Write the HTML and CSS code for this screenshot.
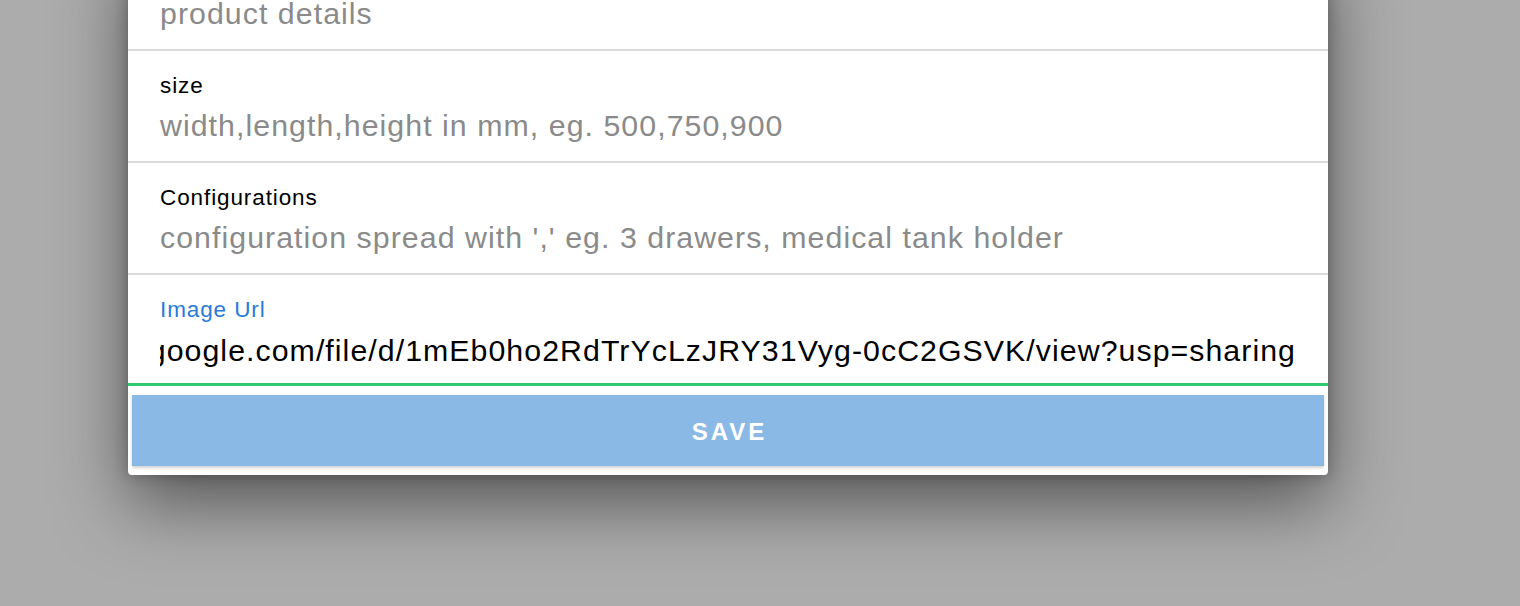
FILE: index.html
```html
<!DOCTYPE html>
<html lang="en">
<head>
<meta charset="utf-8">
<title>Product form</title>
<link rel="stylesheet" href="styles.css">
</head>
<body>
<div class="backdrop">
  <div class="card">
    <div class="row row-first">
      <div class="placeholder">product details</div>
    </div>
    <div class="row">
      <div class="label">size</div>
      <div class="placeholder">width,length,height in mm, eg. 500,750,900</div>
    </div>
    <div class="row">
      <div class="label">Configurations</div>
      <div class="placeholder">configuration spread with ',' eg. 3 drawers, medical tank holder</div>
    </div>
    <div class="row row-focus">
      <div class="label label-focus">Image Url</div>
      <div class="value-clip"><span class="value">https://drive.google.com/file/d/1mEb0ho2RdTrYcLzJRY31Vyg-0cC2GSVK/view?usp=sharing</span></div>
    </div>
    <div class="actions">
      <button class="save">SAVE</button>
    </div>
  </div>
</div>
</body>
</html>
```

FILE: styles.css
```css
html, body {
  margin: 0;
  padding: 0;
  height: 606px;
  overflow: hidden;
}
body {
  background: #acacac;
  font-family: "Liberation Sans", Arial, sans-serif;
}
.backdrop {
  height: 606px;
  overflow: hidden;
  padding-left: 128px;
}
.card {
  width: 1200px;
  margin-top: -61px;
  background: #fff;
  border-radius: 0 0 4px 4px;
  box-shadow: 0 28px 70px rgba(0, 0, 0, 0.5), 0 0 14px rgba(0, 0, 0, 0.25);
}
.row {
  height: 110px;
  border-bottom: 2px solid #dcdcdc;
  padding: 0 32px;
  box-sizing: content-box;
  display: flex;
  flex-direction: column;
}
.row-first {
  justify-content: flex-end;
}
.row-first .placeholder {
  margin-bottom: 17px;
}
.label {
  font-size: 22.5px;
  letter-spacing: 0.9px;
  line-height: 26px;
  margin-top: 22px;
  color: #000;
}
.label-focus {
  color: #2a7bd8;
}
.placeholder {
  font-size: 30.3px;
  letter-spacing: 1.05px;
  line-height: 36px;
  margin-top: 9px;
  color: #8a8a8a;
  white-space: nowrap;
}
.row-focus {
  height: 108px;
  border-bottom: 3px solid #2ecc71;
}
.value-clip {
  margin-top: 10px;
  font-size: 30.3px;
  letter-spacing: 1.05px;
  line-height: 36px;
  color: #000;
  white-space: nowrap;
  overflow: hidden;
  display: flex;
  justify-content: flex-end;
}
.value {
  flex: none;
}
.actions {
  padding: 9px 4px 9px 4px;
}
.save {
  display: block;
  width: 100%;
  height: 71px;
  border: 0;
  margin: 0;
  padding: 3px 0 0 3px;
  background: #8ab9e5;
  color: #fff;
  font-family: "Liberation Sans", Arial, sans-serif;
  font-size: 24px;
  font-weight: 700;
  letter-spacing: 3px;
  box-shadow: 0 2px 3px rgba(0, 0, 0, 0.18);
}
```
